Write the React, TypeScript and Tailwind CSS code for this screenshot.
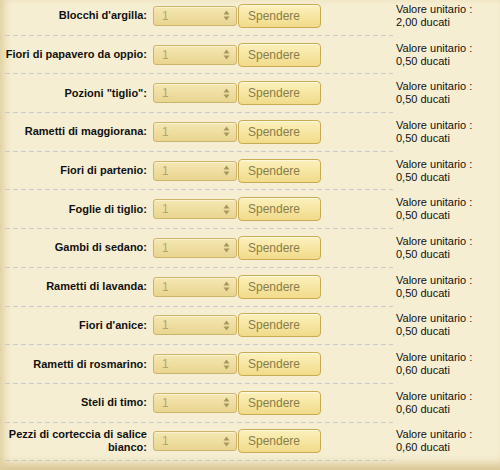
import React from 'react'

const items = [
  { name: "Blocchi d'argilla:", price: '2,00' },
  { name: 'Fiori di papavero da oppio:', price: '0,50' },
  { name: 'Pozioni "tiglio":', price: '0,50' },
  { name: 'Rametti di maggiorana:', price: '0,50' },
  { name: 'Fiori di partenio:', price: '0,50' },
  { name: 'Foglie di tiglio:', price: '0,50' },
  { name: 'Gambi di sedano:', price: '0,50' },
  { name: 'Rametti di lavanda:', price: '0,50' },
  { name: "Fiori d'anice:", price: '0,50' },
  { name: 'Rametti di rosmarino:', price: '0,60' },
  { name: 'Steli di timo:', price: '0,60' },
  { name: 'Pezzi di corteccia di salice bianco:', price: '0,60' },
]

function Arrows() {
  return (
    <svg width="7" height="11" viewBox="0 0 7 11" className="shrink-0">
      <path d="M3.5 0.5 L6.5 4.5 L0.5 4.5 Z" fill="#a8975c" />
      <path d="M3.5 10.5 L6.5 6.5 L0.5 6.5 Z" fill="#a8975c" />
    </svg>
  )
}

function Row({ name, price }: { name: string; price: string }) {
  return (
    <div>
      <div className="flex h-[37.7px] items-center">
        {/* Label */}
        <div className="w-[148px] shrink-0 pr-[1px] text-right text-[11px] font-bold leading-[13px] text-[#111]">
          {name}
        </div>

        {/* Quantity select */}
        <div className="ml-[5px] flex h-[20px] w-[84px] shrink-0 items-center justify-between rounded-[3px] border border-[#cbb46c] bg-[linear-gradient(to_bottom,#f4e7b2,#e9d590)] pl-[8px] pr-[6px] shadow-[inset_0_1px_0_#fbf3d0]">
          <span className="text-[12px] text-[#b6a56a]">1</span>
          <Arrows />
        </div>

        {/* Button */}
        <div className="ml-[1px] flex h-[24px] w-[83px] shrink-0 items-center rounded-[4px] border border-[#c9aa55] bg-[linear-gradient(to_bottom,#fcf0bc,#f1db8a)] pl-[9px] text-[12px] text-[#8a7d48] shadow-[inset_0_1px_0_#fff8dc]">
          Spendere
        </div>

        {/* Unit price */}
        <div className="ml-[75px] text-[11px] leading-[13px] text-[#111]">
          <div>Valore unitario :</div>
          <div>{price} ducati</div>
        </div>
      </div>
      <div className="ml-[5px] h-px w-[388px] bg-[linear-gradient(to_right,#c8cad4_5px,transparent_5px)] bg-[length:8px_1px]" />
    </div>
  )
}

export default function App() {
  return (
    <div
      className="h-[470px] w-[500px] overflow-hidden bg-[#f6eed2] shadow-[inset_7px_0_8px_-3px_#e0cf9e,inset_0_-12px_10px_-6px_#d9c593]"
      style={{ fontFamily: '"Liberation Sans", Arial, sans-serif' }}
    >
      <div className="-mt-[3px]">
        {items.map((it) => (
          <Row key={it.name} name={it.name} price={it.price} />
        ))}
      </div>
    </div>
  )
}
